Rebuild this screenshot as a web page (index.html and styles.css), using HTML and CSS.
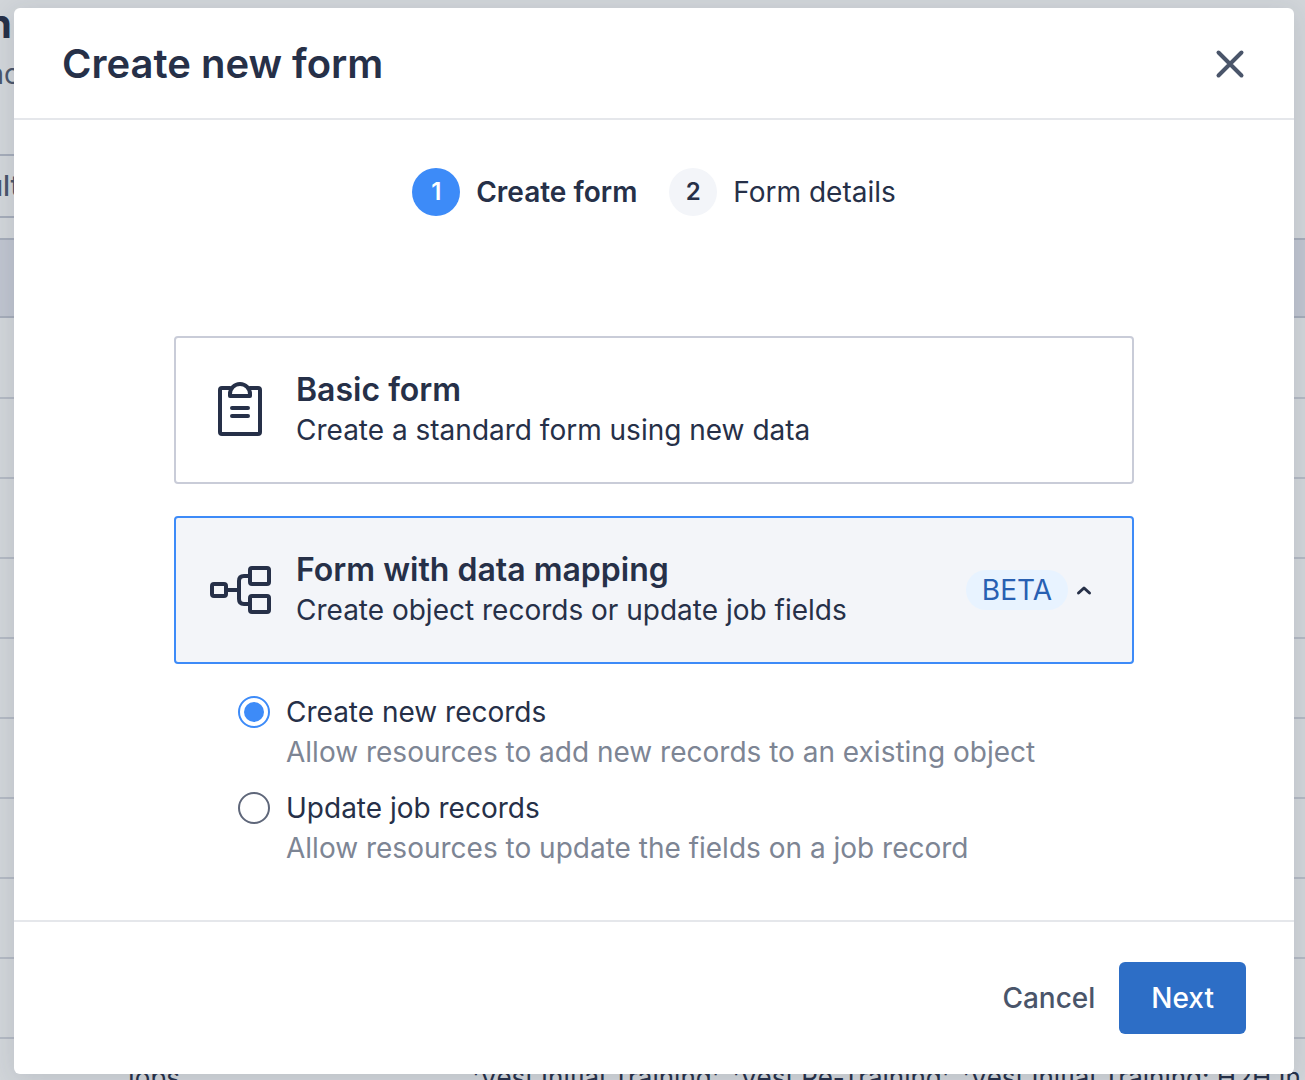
FILE: index.html
```html
<!DOCTYPE html>
<html lang="en">
<head>
<meta charset="utf-8">
<meta name="viewport" content="width=device-width, initial-scale=1">
<title>Create new form</title>
<link rel="stylesheet" href="styles.css">
</head>
<body>
<div class="screen">
  <div class="page" aria-hidden="true">
    <div class="page-title">n</div>
    <div class="page-lead">nc</div>
    <div class="page-filter">ult</div>
    <table class="records">
      <thead><tr><th></th><th></th></tr></thead>
      <tbody>
        <tr><td></td><td></td></tr>
        <tr><td></td><td></td></tr>
        <tr><td></td><td></td></tr>
        <tr><td></td><td></td></tr>
        <tr><td></td><td></td></tr>
        <tr><td></td><td></td></tr>
        <tr><td></td><td></td></tr>
        <tr><td></td><td></td></tr>
        <tr><td></td><td></td></tr>
        <tr><td>Jobs</td><td>'Vest Initial Training', 'Vest Re-Training', 'Vest Initial Training: H2H In</td></tr>
      </tbody>
    </table>
  </div>

  <div class="overlay">
    <form class="modal" role="dialog" aria-labelledby="modal-title">
      <header class="modal-header">
        <h1 class="modal-title" id="modal-title">Create new form</h1>
        <button class="close" type="button" aria-label="Close">
          <svg width="32" height="32" viewBox="0 0 32 32" fill="none" stroke="currentColor" stroke-width="4" stroke-linecap="round"><path d="M4.500 4.500l23 23M27.500 4.500l-23 23"/></svg>
        </button>
      </header>

      <div class="modal-body">
        <ol class="steps">
          <li class="step step-current" aria-current="step"><span class="step-number">1</span><span>Create form</span></li>
          <li class="step"><span class="step-number">2</span><span>Form details</span></li>
        </ol>

        <div class="choices">
          <button class="card" type="button">
            <svg class="card-icon" width="64" height="64" viewBox="0 0 64 64" fill="none" stroke="currentColor" stroke-width="4" stroke-linejoin="round" stroke-linecap="round">
              <path d="M22 10h-8a2 2 0 0 0-2 2v42a2 2 0 0 0 2 2h36a2 2 0 0 0 2-2V12a2 2 0 0 0-2-2h-8"/>
              <path d="M22 18v-2a10 10 0 0 1 20 0v2z"/>
              <path d="M24 30h16M24 38h16"/>
            </svg>
            <span class="card-text">
              <span class="card-title">Basic form</span>
              <span>Create a standard form using new data</span>
            </span>
          </button>

          <button class="card card-selected" type="button" aria-expanded="true">
            <svg class="card-icon" width="64" height="64" viewBox="0 0 64 64" fill="none" stroke="currentColor" stroke-width="4" stroke-linejoin="round">
              <rect x="4" y="26" width="14" height="12" rx="2"/>
              <rect x="42" y="10" width="19" height="16" rx="2"/>
              <rect x="42" y="38" width="19" height="16" rx="2"/>
              <path d="M18 32h13M42 18h-6q-5 0-5 5v18q0 5 5 5h6"/>
            </svg>
            <span class="card-text">
              <span class="card-title">Form with data mapping</span>
              <span>Create object records or update job fields</span>
            </span>
            <span class="badge">BETA</span>
            <svg width="32" height="32" viewBox="0 0 32 32" fill="none" stroke="currentColor" stroke-width="3" stroke-linecap="round" stroke-linejoin="round"><path d="M10.500 19l5.500-5 5.500 5"/></svg>
          </button>
        </div>

        <div class="options">
          <div class="option">
            <input class="radio" type="radio" name="mapping" id="create-records" aria-describedby="create-help" checked>
            <label for="create-records">Create new records</label>
            <p class="option-help" id="create-help">Allow resources to add new records to an existing object</p>
          </div>
          <div class="option">
            <input class="radio" type="radio" name="mapping" id="update-records" aria-describedby="update-help">
            <label for="update-records">Update job records</label>
            <p class="option-help" id="update-help">Allow resources to update the fields on a job record</p>
          </div>
        </div>
      </div>

      <footer class="modal-footer">
        <button class="button" type="button">Cancel</button>
        <button class="button button-primary" type="submit">Next</button>
      </footer>
    </form>
  </div>
</div>
</body>
</html>
```
FILE: styles.css
```css
* {
  box-sizing: border-box;
}

body {
  margin: 0;
  background: #d1d5d9;
  color: #263048;
  font: 400 28px/40px Inter, "Liberation Sans", sans-serif;
}

button {
  font: inherit;
  color: inherit;
  cursor: pointer;
}

svg {
  display: block;
  flex: none;
}

.screen {
  display: grid;
  grid-template: minmax(100vh, auto) / minmax(0, 1fr);
  height: 100vh;
  overflow: hidden;
}

.page,
.overlay {
  grid-area: 1 / 1;
}

/* Page behind the dialog, scrolled partly out of view */
.page {
  overflow: hidden;
  white-space: nowrap;
}

.page-title {
  width: 12px;
  height: 54px;
  display: flex;
  justify-content: flex-end;
  font-size: 40px;
  line-height: 48px;
  font-weight: 700;
}

.page-lead {
  width: 20px;
  height: 100px;
  display: flex;
  justify-content: flex-end;
  color: #4a566b;
}

.page-filter {
  width: 20px;
  height: 64px;
  display: flex;
  align-items: center;
  justify-content: flex-end;
  border: solid #a5acb9;
  border-width: 2px 0;
  color: #4a566b;
  font-weight: 500;
}

.records {
  width: 100%;
  margin-top: 20px;
  border-collapse: separate;
  border-spacing: 0;
  table-layout: fixed;
  font-size: 26px;
}

.records th,
.records td {
  height: 80px;
  padding: 0;
  border-bottom: 2px solid #b3b9c3;
  text-align: left;
}

.records th {
  border-top: 2px solid #a5acb9;
  border-bottom-color: #a5acb9;
  background: #bfc4cf;
}

.records th:first-child {
  width: 472px;
}

.records tbody tr:first-child td {
  height: 81px;
}

.records td:first-child {
  padding-left: 120px;
}

.overlay {
  z-index: 1;
  padding: 8px 11px 6px 14px;
}

.modal {
  display: flex;
  flex-direction: column;
  min-height: 100%;
  border-radius: 6px;
  background: #fff;
  box-shadow: 0 4px 24px rgba(38, 48, 72, 0.12);
}

.modal-header {
  display: flex;
  align-items: center;
  justify-content: space-between;
  padding: 32px 48px 30px;
  border-bottom: 2px solid #e5e7eb;
}

.modal-title {
  margin: 0;
  font-size: 40px;
  line-height: 48px;
  font-weight: 600;
}

.close {
  padding: 0;
  border: 0;
  background: none;
  color: #4a556a;
}

.modal-body {
  flex: 1;
  padding: 48px;
}

.steps {
  display: flex;
  justify-content: center;
  gap: 32px;
  margin: 0;
  padding: 0;
  list-style: none;
}

.step {
  display: flex;
  align-items: center;
  gap: 16px;
}

.step-current {
  font-weight: 600;
}

.step-number {
  width: 48px;
  border-radius: 50%;
  background: #f3f5f9;
  font-size: 24px;
  line-height: 48px;
  font-weight: 600;
  text-align: center;
}

.step-current .step-number {
  background: #3d8bf8;
  color: #fff;
}

.choices,
.options {
  display: flex;
  flex-direction: column;
  max-width: 960px;
}

.choices {
  gap: 32px;
  margin: 120px auto 0;
}

.card {
  display: flex;
  align-items: center;
  padding: 32px;
  border: 2px solid #c9ccd8;
  border-radius: 4px;
  background: #fff;
  text-align: left;
}

.card-selected {
  border-color: #3d8bf8;
  background: #f3f5f9;
}

.card-icon {
  margin-right: 24px;
}

.card-text {
  display: flex;
  flex: 1;
  flex-direction: column;
}

.card-title {
  font-size: 32px;
  font-weight: 600;
}

.badge {
  padding: 0 16px;
  border-radius: 20px;
  background: #e8f3ff;
  color: #2860b2;
}

.options {
  gap: 16px;
  margin: 28px auto 0;
  padding-left: 64px;
}

.option {
  display: grid;
  grid-template-columns: 32px 1fr;
  column-gap: 16px;
  align-items: center;
}

.option-help {
  grid-column: 2;
  margin: 0;
  color: #7d8594;
}

.radio {
  appearance: none;
  width: 32px;
  height: 32px;
  margin: 0;
  border: 2px solid #5f677a;
  border-radius: 50%;
  background: #fff;
}

.radio:checked {
  padding: 4px;
  border-color: #3d8bf8;
  background: #3d8bf8 content-box;
}

.modal-footer {
  display: flex;
  justify-content: flex-end;
  padding: 40px 48px;
  border-top: 2px solid #e5e7eb;
}

.button {
  padding: 16px 24px;
  border: 0;
  border-radius: 6px;
  background: none;
  color: #4a556a;
  font-weight: 500;
}

.button-primary {
  padding: 16px 32px;
  background: #2d6ec6;
  color: #fff;
}
```
